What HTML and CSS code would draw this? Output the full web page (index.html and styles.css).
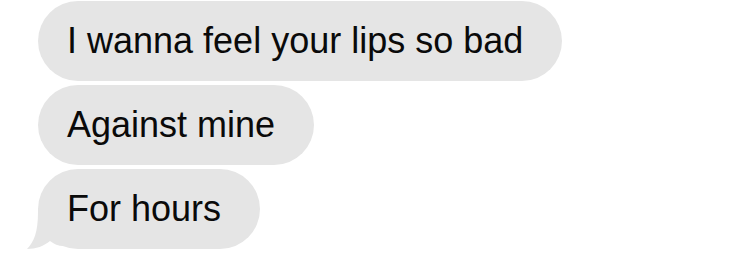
FILE: index.html
```html
<!DOCTYPE html>
<html>

<head>
    <link rel="stylesheet" href="styles.css">
</head>

<body>

    <div class="thread">
        <div class="bubble">I wanna feel your lips so bad</div>
        <div class="bubble">Against mine</div>
        <div class="bubble">
            For hours
            <!-- tail of the last bubble -->
            <svg class="tail" width="40" height="44" viewBox="0 0 40 44">
                <path d="M14 0 L14 4 C14 24 10 34 3 41 C12 41 20 38 26 33 C30 36 34 38 40 38 L40 0 Z" fill="#e5e5e5" />
            </svg>
        </div>
    </div>

</body>

</html>
```

FILE: styles.css
```css
body {
    margin: 0;
    background-color: white;
    font-family: "Liberation Sans", Arial, sans-serif;
}

.thread {
    display: flex;
    flex-direction: column;
    align-items: flex-start;
    gap: 4px;
    padding: 1px 0 0 38px;
}

.bubble {
    position: relative;
    display: flex;
    align-items: center;
    height: 80px;
    padding: 0 39px 0 29px;
    border-radius: 40px;
    background-color: #e5e5e5;
    color: #0a0a0a;
    font-size: 36px;
    box-sizing: border-box;
}

.tail {
    position: absolute;
    left: -14px;
    bottom: -3px;
}
```
